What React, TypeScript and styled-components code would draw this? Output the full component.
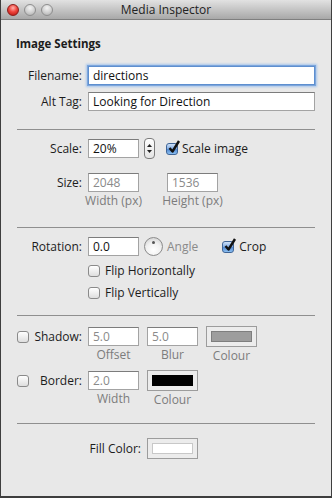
import styled, { createGlobalStyle } from "styled-components";

const GlobalStyle = createGlobalStyle`
  html, body {
    margin: 0;
    padding: 0;
    background: #e8e8e8;
  }
  body {
    font-family: "Open Sans", "DejaVu Sans", sans-serif;
  }
`;

const Window = styled.div`
  width: 332px;
  height: 498px;
  box-sizing: border-box;
  background: #e8e8e8;
  border: 1px solid #3e3e3e;
  border-top: none;
  border-bottom-width: 2px;
  display: flex;
  flex-direction: column;
  color: #1c1c1c;
  font-size: 12px;
`;

const TitleBar = styled.div`
  height: 19px;
  flex: none;
  display: grid;
  grid-template-columns: 1fr auto 1fr;
  align-items: center;
  background: linear-gradient(#e2e2e2, #a8a8a8);
  border-bottom: 1px solid #7f7f7f;
  font-size: 12px;
  color: #222;
`;

const Lights = styled.div`
  display: flex;
  gap: 5px;
  padding-left: 6px;
`;

const Light = styled.span<{ $red?: boolean }>`
  width: 12px;
  height: 12px;
  box-sizing: border-box;
  border-radius: 50%;
  border: 1px solid ${(p) => (p.$red ? "#8c1d1a" : "#8e8e8e")};
  background: ${(p) =>
    p.$red
      ? "radial-gradient(circle at 50% 30%, #ffb3ae 0%, #f0463e 45%, #b3120c 100%)"
      : "radial-gradient(circle at 50% 30%, #f4f4f4 0%, #d2d2d2 50%, #a9a9a9 100%)"};
`;

const Body = styled.div`
  flex: 1;
  padding: 0 16px 0 15px;
`;

const Heading = styled.div`
  margin-top: 17px;
  font-weight: 700;
  font-size: 11.5px;
  line-height: 14px;
`;

const Separator = styled.div<{ $top: number }>`
  height: 1px;
  margin: ${(p) => p.$top}px 0 0 1px;
  background: #8f8f8f;
`;

const Row = styled.div<{ $top: number; $label?: number }>`
  display: grid;
  grid-template-columns: ${(p) => p.$label ?? 66}px 1fr;
  column-gap: 6px;
  align-items: start;
  margin-top: ${(p) => p.$top}px;
`;

const Label = styled.div<{ $check?: boolean }>`
  height: 19px;
  display: flex;
  align-items: center;
  justify-content: ${(p) => (p.$check ? "space-between" : "flex-end")};
  padding-left: ${(p) => (p.$check ? 1 : 0)}px;
  white-space: nowrap;
`;

const Controls = styled.div<{ $gap?: number }>`
  display: flex;
  align-items: start;
  gap: ${(p) => p.$gap ?? 8}px;
`;

const Inline = styled.div<{ $gap?: number; $left?: number }>`
  display: flex;
  align-items: center;
  gap: ${(p) => p.$gap ?? 4}px;
  height: 19px;
  margin-left: ${(p) => p.$left ?? 0}px;
  white-space: nowrap;
`;

const Field = styled.div<{ $wide?: boolean; $dim?: boolean; $focus?: boolean }>`
  width: ${(p) => (p.$wide ? "auto" : "51px")};
  height: 19px;
  box-sizing: border-box;
  padding: 0 4px;
  background: #fff;
  border: 1px solid #a3a3a3;
  border-top-color: #7c7c7c;
  line-height: 17px;
  color: ${(p) => (p.$dim ? "#8a8a8a" : "#111")};
  box-shadow: ${(p) =>
    p.$focus ? "0 0 0 1px #7da6dc, 0 0 2px 2px #a8c6ec" : "none"};
  ${(p) => (p.$focus ? "border-color: #5e8fcf;" : "")}
`;

const Group = styled.div`
  width: 51px;
  display: flex;
  flex-direction: column;
  align-items: center;
`;

const Caption = styled.div`
  margin-top: 2px;
  line-height: 14px;
  color: #7c7c7c;
  white-space: nowrap;
`;

const Dim = styled.span`
  color: #8a8a8a;
`;

const Well = styled.div<{ $fill: string; $edge: string }>`
  width: 51px;
  height: 21px;
  box-sizing: border-box;
  padding: 4px;
  border: 1px solid #9c9c9c;
  background: #ececec;
  margin-top: -1px;
  &::after {
    content: "";
    display: block;
    height: 100%;
    box-sizing: border-box;
    background: ${(p) => p.$fill};
    border: 1px solid ${(p) => p.$edge};
  }
`;

const Box = styled.span<{ $on?: boolean }>`
  position: relative;
  flex: none;
  width: 12px;
  height: 12px;
  box-sizing: border-box;
  border-radius: 3px;
  border: 1px solid ${(p) => (p.$on ? "#3f6597" : "#8a8a8a")};
  background: ${(p) =>
    p.$on
      ? "linear-gradient(#cfe1f7, #7eaae3 50%, #4f86cf 51%, #8cc0f2)"
      : "linear-gradient(#ffffff, #dedede)"};
  svg {
    position: absolute;
    left: 1px;
    top: -4px;
  }
`;

const Stepper = styled.div`
  width: 11px;
  height: 21px;
  box-sizing: border-box;
  margin-top: -1px;
  border: 1px solid #7c7c7c;
  border-radius: 4px;
  background: linear-gradient(#ffffff, #e4e4e4);
  display: flex;
  flex-direction: column;
  align-items: center;
  justify-content: center;
  gap: 3px;
`;

const Dial = styled.div`
  width: 19px;
  height: 19px;
  box-sizing: border-box;
  border-radius: 50%;
  border: 1px solid #8b8b8b;
  background: radial-gradient(circle at 50% 70%, #ffffff 0%, #f0f0f0 50%, #c9c9c9 100%);
  display: flex;
  justify-content: center;
  padding-top: 3px;
  &::after {
    content: "";
    width: 3px;
    height: 3px;
    border-radius: 50%;
    background: #555;
  }
`;

const Check = ({ on }: { on?: boolean }) => (
  <Box $on={on}>
    {on && (
      <svg width="13" height="14" viewBox="0 0 13 14">
        <path d="M1.5 8 L4.5 11.5 L11 1" fill="none" stroke="#111" strokeWidth="2.4" strokeLinejoin="round" />
      </svg>
    )}
  </Box>
);

const Arrows = () => (
  <>
    <svg width="5" height="3" viewBox="0 0 5 3">
      <path d="M0 3 L2.5 0 L5 3Z" fill="#222" />
    </svg>
    <svg width="5" height="3" viewBox="0 0 5 3">
      <path d="M0 0 L2.5 3 L5 0Z" fill="#222" />
    </svg>
  </>
);

export default function App() {
  return (
    <>
      <GlobalStyle />
      <Window>
        <TitleBar>
          <Lights>
            <Light $red />
            <Light />
            <Light />
          </Lights>
          <span>Media Inspector</span>
          <span />
        </TitleBar>
        <Body>
          <Heading>Image Settings</Heading>
          <Row $top={15}>
            <Label>Filename:</Label>
            <Field $wide $focus>directions</Field>
          </Row>
          <Row $top={7}>
            <Label>Alt Tag:</Label>
            <Field $wide>Looking for Direction</Field>
          </Row>

          <Separator $top={18} />
          <Row $top={9}>
            <Label>Scale:</Label>
            <Controls $gap={5}>
              <Field>20%</Field>
              <Stepper>
                <Arrows />
              </Stepper>
              <Inline $left={6}>
                <Check on />
                Scale image
              </Inline>
            </Controls>
          </Row>
          <Row $top={14}>
            <Label>Size:</Label>
            <Controls $gap={28}>
              <Group>
                <Field $dim>2048</Field>
                <Caption>Width (px)</Caption>
              </Group>
              <Group>
                <Field $dim>1536</Field>
                <Caption>Height (px)</Caption>
              </Group>
            </Controls>
          </Row>

          <Separator $top={19} />
          <Row $top={9}>
            <Label>Rotation:</Label>
            <Controls $gap={5}>
              <Field>0.0</Field>
              <Inline $gap={4}>
                <Dial />
                <Dim>Angle</Dim>
              </Inline>
              <Inline $left={19} $gap={5}>
                <Check on />
                Crop
              </Inline>
            </Controls>
          </Row>
          <Row $top={5}>
            <span />
            <Inline $gap={5}>
              <Check />
              Flip Horizontally
            </Inline>
          </Row>
          <Row $top={3}>
            <span />
            <Inline $gap={5}>
              <Check />
              Flip Vertically
            </Inline>
          </Row>

          <Separator $top={13} />
          <Row $top={11}>
            <Label $check>
              <Check />
              Shadow:
            </Label>
            <Controls $gap={8}>
              <Group>
                <Field $dim>5.0</Field>
                <Caption>Offset</Caption>
              </Group>
              <Group>
                <Field $dim>5.0</Field>
                <Caption>Blur</Caption>
              </Group>
              <Group>
                <Well $fill="#9d9d9d" $edge="#7e7e7e" />
                <Caption>Colour</Caption>
              </Group>
            </Controls>
          </Row>
          <Row $top={8}>
            <Label $check>
              <Check />
              Border:
            </Label>
            <Controls $gap={8}>
              <Group>
                <Field $dim>2.0</Field>
                <Caption>Width</Caption>
              </Group>
              <Group>
                <Well $fill="#000" $edge="#000" />
                <Caption>Colour</Caption>
              </Group>
            </Controls>
          </Row>

          <Separator $top={16} />
          <Row $top={15} $label={125}>
            <Label>Fill Color:</Label>
            <Controls>
              <Well $fill="#fff" $edge="#c8c8c8" />
            </Controls>
          </Row>
        </Body>
      </Window>
    </>
  );
}
